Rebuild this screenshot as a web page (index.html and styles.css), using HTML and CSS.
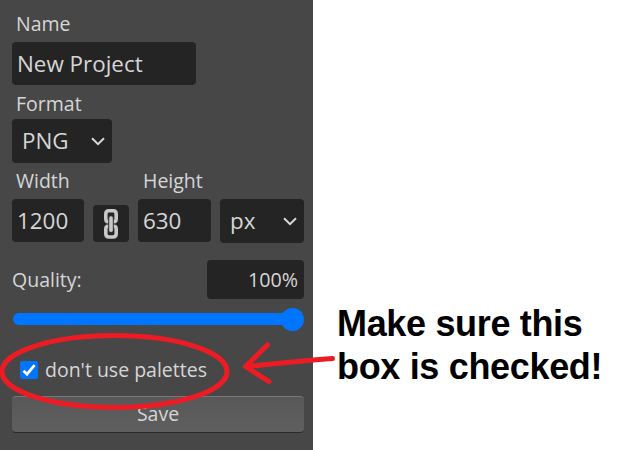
FILE: index.html
```html
<!DOCTYPE html>
<html lang="en">
<head>
<meta charset="utf-8">
<title>Export settings</title>
<link rel="stylesheet" href="styles.css">
</head>
<body>
<main class="page">
  <section class="panel">
    <div class="label"><span>Name</span></div>
    <div class="field name-field"><span>New Project</span></div>
    <div class="label format-label"><span>Format</span></div>
    <div class="field select format-field"><span>PNG</span>
      <svg class="chevron" viewBox="0 0 14 9"><path d="M1 1.2 7 7.2 13 1.2"/></svg>
    </div>
    <div class="size-row">
      <div class="size-col width-col"><div class="label"><span>Width</span></div><div class="field"><span>1200</span></div></div>
      <div class="link">
        <svg viewBox="0 0 36 37"><g fill="none" stroke="#c8c8c8" stroke-width="3.6"><path d="M15.500 16.700H15Q12.800 16.700 12.800 13.500V9Q12.800 5.800 16 5.800H20Q23.200 5.800 23.200 9V13.500Q23.200 16.700 21 16.700H20.500"/><path d="M15.500 21.300H15Q12.800 21.300 12.800 24V28.800Q12.800 32 16 32H20Q23.200 32 23.200 28.800V24Q23.200 21.300 21 21.300H20.500"/></g><path d="M18 13.200V25" fill="none" stroke="#3a3a3a" stroke-width="5.400" stroke-linecap="round"/><path d="M18 13V25.200" fill="none" stroke="#c8c8c8" stroke-width="3.600" stroke-linecap="round"/></svg>
      </div>
      <div class="size-col height-col"><div class="label"><span>Height</span></div><div class="field"><span>630</span></div></div>
      <div class="field select unit-field"><span>px</span>
        <svg class="chevron" viewBox="0 0 14 9"><path d="M1 1.2 7 7.2 13 1.2"/></svg>
      </div>
    </div>
    <div class="quality-row"><span>Quality:</span><div class="field quality-field"><span>100%</span></div></div>
    <div class="slider"><div class="track"></div><div class="thumb"></div></div>
    <div class="check-row">
      <svg class="checkbox" viewBox="0 0 18 18"><rect width="18" height="18" rx="2.500" fill="#0075ff"/><path d="M3.500 9.700 7 13.200 14.600 4.200" fill="none" stroke="#fff" stroke-width="2.700"/></svg>
      <span>don't use palettes</span>
    </div>
    <div class="save"><span>Save</span></div>
  </section>
  <p class="note">Make sure this<br>box is checked!</p>
</main>
<svg class="marks" viewBox="0 0 644 450">
  <ellipse cx="114.500" cy="371.500" rx="112.500" ry="36"/>
  <path d="M332.500 358.500 C300 361 275 364 245.500 366.500M267.500 345 245.500 366.500 269 381.500"/>
</svg>
</body>
</html>
```

FILE: styles.css
```css
* { box-sizing: border-box; }

body {
  margin: 0;
  background: #fff;
  overflow: hidden;
}

.page {
  display: flex;
  height: 450px;
}

.panel {
  width: 313px;
  height: 450px;
  padding: 10px 9px 0 12px;
  background: #474747;
  color: #d6d6d6;
  font: 19.5px/27px "Open Sans", "Noto Sans", sans-serif;
}

.panel span { white-space: nowrap; }

.label {
  height: 27px;
  padding-left: 4px;
  margin-bottom: 5px;
}

.field {
  display: flex;
  align-items: center;
  height: 43px;
  padding: 0 6px 0 5px;
  border-radius: 4px;
  background: #242424;
  font-size: 22.4px;
}

.name-field { width: 184px; }
.format-label { margin: 5px 0 2px; }

.select {
  height: 44px;
  justify-content: space-between;
  padding: 0 7px 0 10px;
}

.select span { margin-top: -2px; }
.format-field { width: 100px; }

.chevron {
  width: 14px;
  height: 9px;
  fill: none;
  stroke: #d8d8d8;
  stroke-width: 2;
}

.size-row {
  display: flex;
  align-items: flex-end;
  gap: 9px;
  height: 76px;
  margin-top: 4px;
}

.size-col { margin-bottom: 1px; }
.width-col { width: 72px; }
.height-col { width: 73px; }
.height-col .label { padding-left: 5px; }

.link {
  width: 36px;
  height: 37px;
  margin-bottom: 1px;
  border-radius: 4px;
  background: #242424;
}

.link svg { display: block; }
.unit-field { width: 84px; }

.quality-row {
  display: flex;
  align-items: center;
  justify-content: space-between;
  margin-top: 17px;
}

.quality-field {
  width: 97px;
  height: 39px;
  justify-content: flex-end;
  font-size: 19.7px;
}

.slider {
  display: flex;
  align-items: center;
  height: 24px;
  margin-top: 8px;
}

.track {
  width: 279px;
  height: 12px;
  margin-left: 1px;
  border-radius: 6px;
  background: #0075ff;
}

.thumb {
  flex: none;
  width: 23px;
  height: 23px;
  margin-left: -11px;
  border-radius: 50%;
  background: #0075ff;
}

.check-row {
  display: flex;
  align-items: center;
  gap: 7px;
  height: 28px;
  margin: 24px 0 13px;
  padding-left: 8px;
}

.checkbox {
  width: 18px;
  height: 18px;
  margin-top: 2px;
}

.save {
  height: 37px;
  border-top: 1px solid #777;
  border-bottom: 1px solid #2a2a2a;
  border-radius: 4px;
  background: linear-gradient(#585858, #5f5f5f);
  line-height: 34px;
  text-align: center;
}

.note {
  margin: 302px 0 0 24px;
  color: #000;
  font: bold 36px/43px "Liberation Sans", Arial, sans-serif;
  letter-spacing: -0.33px;
  white-space: nowrap;
}

.marks {
  position: absolute;
  inset: 0;
  width: 644px;
  height: 450px;
  fill: none;
  stroke: #ed1c24;
  stroke-width: 5;
  stroke-linecap: round;
  stroke-linejoin: round;
}
```
